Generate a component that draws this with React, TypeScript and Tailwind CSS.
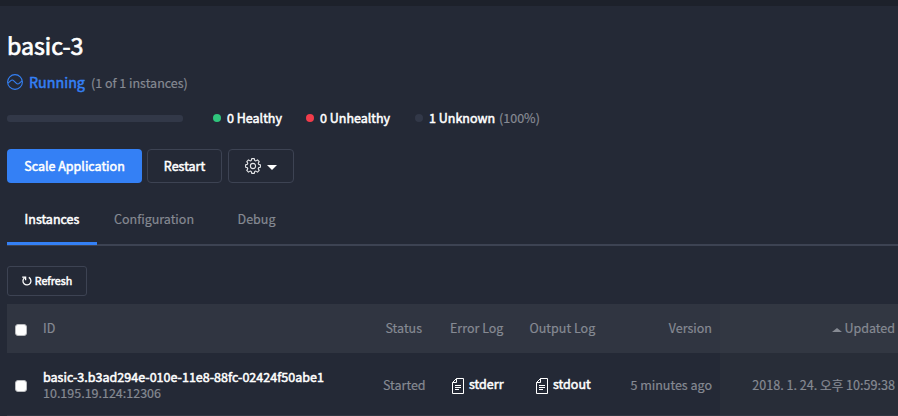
import React from "react";

const strong = "text-white [-webkit-text-stroke:0.5px_#fff]";

function Wave() {
  return (
    <svg className="block h-4 w-4 shrink-0" viewBox="0 0 16 16" fill="none" stroke="#3480f5" strokeWidth="1.1">
      <circle cx="8" cy="8" r="7.4" />
      <path d="M1 9.200L3.800 6.600Q5.300 5.300 6.800 6.800L9.200 9.200Q10.700 10.700 12.200 9.400L15 6.800" />
    </svg>
  );
}

function Gear() {
  return (
    <svg className="block h-4 w-4" viewBox="0 0 16 16" fill="none" stroke="#e6e7ea" strokeWidth="1.1" strokeLinejoin="round">
      <path d="M6.700 .6h2.600l.4 1.800 1.200.5 1.600-1 1.700 1.700-1 1.600.5 1.200 1.700.4v2.400l-1.700.4-.5 1.200 1 1.600-1.700 1.700-1.600-1-1.200.5-.4 1.800H6.700l-.4-1.800-1.200-.5-1.600 1-1.700-1.700 1-1.600-.5-1.200L.6 9.200V6.800l1.700-.4.5-1.200-1-1.600 1.700-1.700 1.600 1 1.200-.5z" />
      <circle cx="8" cy="8" r="2.600" />
    </svg>
  );
}

function FileIcon() {
  return (
    <svg className="mt-0.5 block h-4 w-3 shrink-0" viewBox="0 0 12 16" fill="none" stroke="#fff" strokeWidth="1">
      <path d="M4.500 .5h7v15H.5v-11zM4.500 .5v4h-4M3 7.500h6M3 9.500h6M3 11.500h4" />
    </svg>
  );
}

function Health({ color, label, extra }: { color: string; label: string; extra?: string }) {
  return (
    <div className="flex items-center">
      <span className={`mr-1.5 h-2 w-2 rounded-full ${color}`} />
      <span className={strong}>{label}</span>
      {extra && <span className="ml-1">{extra}</span>}
    </div>
  );
}

function Check() {
  return <span className="block h-3 w-3 rounded-[3px] border border-[#b9bbbe] bg-white" />;
}

export default function App() {
  return (
    <div className="h-[416px] w-[898px] overflow-hidden bg-[#242936] pl-[7px] font-['Noto_Sans_CJK_KR',sans-serif] text-[12.5px] leading-[16px] whitespace-nowrap text-[#868a93] [-webkit-text-stroke:0.2px_#868a93]">
      <div className="-ml-[7px] h-1.5 bg-[#1d212b]" />
      <h1 className="mt-[25px] h-7 text-[23.200px] leading-7 text-white [-webkit-text-stroke:0.7px_#fff]">basic-3</h1>
      <div className="mt-[15px] flex h-4 items-center">
        <Wave />
        <span className="ml-1.5 text-[14.300px] text-[#3480f5] [-webkit-text-stroke:0.5px_#3480f5]">Running</span>
        <span className="mt-px ml-1.5">(1 of 1 instances)</span>
      </div>
      <div className="mt-5 flex h-4 items-center">
        <div className="mr-[30px] h-[7px] w-44 rounded-[3px] bg-[#323848]" />
        <div className="w-[93px]"><Health color="bg-[#2fc57c]" label="0 Healthy" /></div>
        <div className="w-[109px]"><Health color="bg-[#f23c4b]" label="0 Unhealthy" /></div>
        <Health color="bg-[#323848]" label="1 Unknown" extra="(100%)" />
      </div>
      <div className="mt-[23px] flex h-[34px] gap-[5px]">
        <button className={`h-[34px] w-[135px] rounded bg-[#3480f5] ${strong}`}>Scale Application</button>
        <button className={`h-[34px] w-[75px] rounded border border-[#3d4353] ${strong}`}>Restart</button>
        <button className="ml-px flex h-[34px] w-[66px] items-center justify-center gap-1.5 rounded border border-[#3d4353]">
          <Gear />
          <span className="mt-0.5 h-0 w-0 border-x-[5px] border-t-[5px] border-x-transparent border-t-white" />
        </button>
      </div>
      <div className="mt-5 flex h-[43px] border-b-2 border-[#3d4353]">
        <div className={`h-[42px] w-[90px] border-b-[3px] border-[#3480f5] pt-2 text-center ${strong}`}>Instances</div>
        <div className="w-[114px] pt-2 text-center">Configuration</div>
        <div className="w-[91px] pt-2 text-center">Debug</div>
      </div>
      <button className={`mt-5 flex h-[30px] w-20 items-center justify-center gap-[3px] rounded-[3px] border border-[#3d4353] text-[10.700px] ${strong}`}>
        <svg className="h-[10px] w-[10px]" viewBox="0 0 10 10" fill="none" stroke="#fff" strokeWidth="1.300">
          <path d="M6.800 1.400A4 4 0 1 1 2.600 1.700M.2 1.100h3.400v3.200" />
        </svg>
        Refresh
      </button>
      <div className="mt-2 flex h-[49px] items-center bg-[#303541]">
        <div className="w-9 pt-[3px] pl-2"><Check /></div>
        <div className="w-[320px] pb-0.5">ID</div>
        <div className="w-[60px] pb-0.5 pl-[22.500px]">Status</div>
        <div className="w-[90px] pb-0.5 pl-[27px]">Error Log</div>
        <div className="w-[90px] pb-0.5 pl-[16.500px]">Output Log</div>
        <div className="w-[117px] pr-2 pb-0.5 text-right">Version</div>
        <div className="flex h-full flex-1 items-center justify-end bg-[#323742] pr-[3px] pb-0.5">
          <span className="mt-1 mr-0.5 h-0 w-0 border-x-[5px] border-b-4 border-x-transparent border-b-[#868a93]" />
          Updated
        </div>
      </div>
      <div className="flex h-[62px] items-center">
        <div className="w-9 pt-1 pl-2"><Check /></div>
        <div className="w-[320px] pt-0.5">
          <div className={`text-[12.540px] ${strong}`}>basic-3.b3ad294e-010e-11e8-88fc-02424f50abe1</div>
          <div>10.195.19.124:12306</div>
        </div>
        <div className="w-[80px] pt-0.5 pl-5">Started</div>
        <div className={`flex w-[84px] items-start gap-[5px] pt-0.5 pl-[9px] ${strong}`}><FileIcon />stderr</div>
        <div className={`flex w-[76px] items-start gap-[5px] pt-0.5 pl-[9px] ${strong}`}><FileIcon />stdout</div>
        <div className="w-[117px] pt-0.5 pr-2 text-right">5 minutes ago</div>
        <div className="flex h-full flex-1 items-center justify-end bg-[#282d38] pt-0.5 pr-[3px] text-[12.600px]">2018. 1. 24. 오후 10:59:38</div>
      </div>
      <div className="h-1 bg-[#303541]" />
    </div>
  );
}
